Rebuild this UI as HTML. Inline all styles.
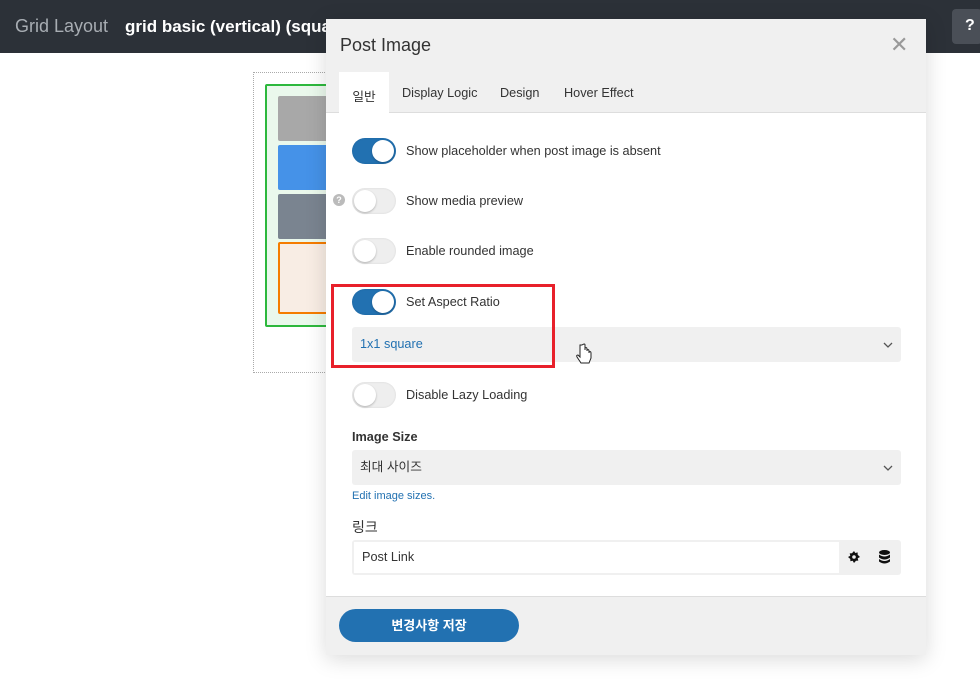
<!DOCTYPE html>
<html><head><meta charset="utf-8"><style>
*{box-sizing:border-box;margin:0;padding:0}
body{width:980px;height:700px;background:#fff;font-family:"Liberation Sans","Noto Sans CJK KR",sans-serif;position:relative;overflow:hidden;color:#333}
.top{position:absolute;left:0;top:0;width:980px;height:53px;background:#2c3138}
.top .t1{position:absolute;left:15px;top:16px;font-size:18px;color:#a8adb3}
.top .t2{position:absolute;left:125px;top:17px;font-size:17px;color:#fff;font-weight:bold}
.q{position:absolute;left:952px;top:9px;width:30px;height:35px;background:#4a4f57;border-radius:4px;color:#fff;font-weight:bold;font-size:16px;padding:8px 0 0 13px}
.frame{position:absolute;left:253px;top:72px;width:90px;height:301px;border:1px dotted #aaa}
.green{position:absolute;left:265px;top:84px;width:80px;height:243px;border:2px solid #2db83d;background:#eaf8ec;border-radius:2px}
.b{position:absolute;left:278px;width:60px;border-radius:2px}
.modal{position:absolute;left:326px;top:19px;width:600px;height:636px;background:#fff;box-shadow:0 4px 20px rgba(0,0,0,.15)}
.hd{position:absolute;left:0;top:0;width:600px;height:94px;background:#f0f0f0;border-bottom:1px solid #ddd}
.hd h1{position:absolute;left:14px;top:16px;font-size:18px;font-weight:normal;color:#333}
.x{position:absolute;left:564px;top:13px;font-size:22px;color:#999}
.tab{position:absolute;top:53px;height:41px;font-size:12.7px;color:#333;padding-top:14px}
.tab.a{background:#fff;left:13px;width:50px;text-align:center;height:42px}
.row{position:absolute;left:26px;height:26px;font-size:12.7px;color:#333}
.tg{position:absolute;left:0;top:0;width:44px;height:26px;border-radius:13px;background:#eee;box-shadow:inset 0 0 2px rgba(0,0,0,.1)}
.tg i{position:absolute;left:2px;top:2px;width:22px;height:22px;border-radius:50%;background:#fff;box-shadow:0 1px 2px rgba(0,0,0,.25)}
.tg.on{background:#2271b1}.tg.on i{left:20px}
.row span{position:absolute;left:54px;top:6px;white-space:nowrap}
.sel{position:absolute;left:26px;width:549px;height:35px;background:#f0f0f0;border-radius:3px;font-size:12.7px;line-height:35px;padding:0 8px}
.sel svg{position:absolute;right:8px;top:15px}
.lbl{position:absolute;left:26px;font-size:12.7px;font-weight:bold;color:#333}
.ft{position:absolute;left:0;top:577px;width:600px;height:59px;background:#f0f0f0;border-top:1px solid #ddd}
.btn{position:absolute;left:13px;top:12px;width:180px;height:33px;border-radius:17px;background:#2271b1;color:#fff;font-weight:bold;font-size:13px;text-align:center;line-height:33px}
</style></head><body>
<div class="top"><div class="t1">Grid Layout</div><div class="t2">grid basic (vertical) (square)</div><div class="q">?</div></div>
<div class="frame"></div>
<div class="green"></div>
<div class="b" style="top:96px;height:45px;background:#a8a8a8"></div>
<div class="b" style="top:145px;height:45px;background:#4592e8"></div>
<div class="b" style="top:194px;height:45px;background:#7a8490"></div>
<div class="b" style="top:242px;height:72px;background:#f8ede4;border:2px solid #f57c00"></div>
<div class="modal">
<div class="hd"><h1>Post Image</h1><div class="x">✕</div>
<div class="tab a">일반</div>
<div class="tab" style="left:76px">Display Logic</div>
<div class="tab" style="left:174px">Design</div>
<div class="tab" style="left:238px">Hover Effect</div></div>
<div class="row" style="top:119px"><div class="tg on"><i></i></div><span>Show placeholder when post image is absent</span></div>
<div style="position:absolute;left:7px;top:175px;width:12px;height:12px;border-radius:50%;background:#bbb;color:#fff;font-size:9px;font-weight:bold;text-align:center;line-height:12px">?</div>
<div class="row" style="top:169px"><div class="tg"><i></i></div><span>Show media preview</span></div>
<div class="row" style="top:219px"><div class="tg"><i></i></div><span>Enable rounded image</span></div>
<div class="row" style="top:270px"><div class="tg on"><i></i></div><span>Set Aspect Ratio</span></div>
<div class="sel" style="top:308px;color:#2271b1">1x1 square<svg width="10" height="6" viewBox="0 0 10 6"><path d="M1 1l4 4 4-4" fill="none" stroke="#555" stroke-width="1.3"/></svg></div>
<div style="position:absolute;left:5px;top:265px;width:224px;height:84px;border:3px solid #e8202a"></div>
<div class="row" style="top:363px"><div class="tg"><i></i></div><span>Disable Lazy Loading</span></div>
<div class="lbl" style="top:411px">Image Size</div>
<div class="sel" style="top:431px">최대 사이즈<svg width="10" height="6" viewBox="0 0 10 6"><path d="M1 1l4 4 4-4" fill="none" stroke="#555" stroke-width="1.3"/></svg></div>
<div style="position:absolute;left:26px;top:471px;font-size:11px;color:#2271b1">Edit image sizes.</div>
<div class="lbl" style="top:498px;font-weight:normal;font-size:14px">링크</div>
<div style="position:absolute;left:26px;top:521px;width:549px;height:35px;background:#f0f0f0;border-radius:3px">
<div style="position:absolute;left:2px;top:2px;width:485px;height:31px;background:#fff;font-size:12.7px;line-height:31px;padding:0 8px">Post Link</div>
<svg style="position:absolute;left:496px;top:11px" width="12" height="12" viewBox="0 0 12 12"><path d="M6 0l1.3 2 2.3-.6.1 2.3L12 6l-2.3 1.3.6 2.3-2.3.1L6 12 4.7 9.7l-2.3.6-.1-2.3L0 6l2.3-1.3-.6-2.3 2.3-.1z" fill="#111"/><circle cx="6" cy="6" r="1.8" fill="#f0f0f0"/></svg>
<svg style="position:absolute;left:527px;top:10px" width="11" height="14" viewBox="0 0 11 14"><ellipse cx="5.5" cy="2.5" rx="5.5" ry="2.5" fill="#111"/><path d="M0 4.5q5.5 4 11 0v3q-5.5 4-11 0z M0 9q5.5 4 11 0v2.5q-5.5 4-11 0z" fill="#111"/></svg>
</div>
<div class="ft"><div class="btn">변경사항 저장</div></div>
</div>
<svg style="position:absolute;left:575px;top:343px" width="18" height="24" viewBox="0 0 18 24"><path d="M5 2v12l-2-2q-2 0-1 2l4 6h8l2-5v-5q0-2-2-1v1-2q0-2-2-1v1-2q0-2-2-1v2V2q0-2-3 0z" fill="#fff" stroke="#222" stroke-width="1"/></svg>
</body></html>
